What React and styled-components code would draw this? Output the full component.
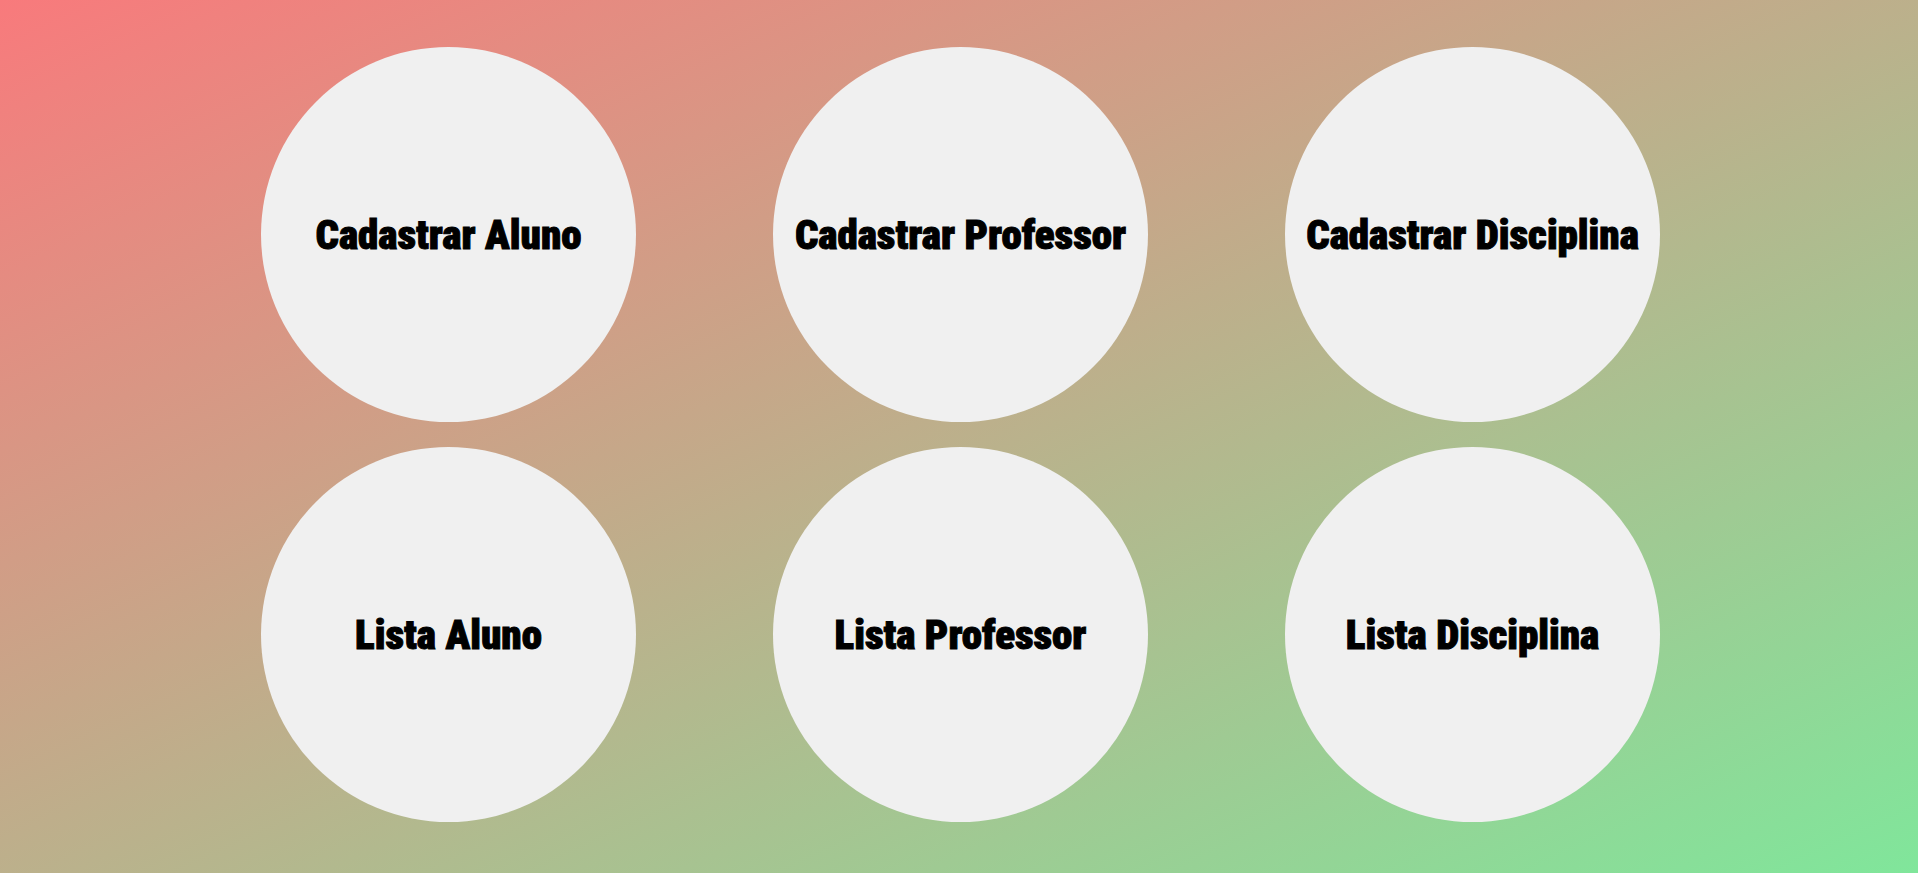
import React from "react";
import styled, { createGlobalStyle } from "styled-components";

const GlobalStyle = createGlobalStyle`
  * {
    box-sizing: border-box;
  }
  body {
    margin: 0;
  }
`;

const Page = styled.main`
  min-height: 100vh;
  padding: 47px 121px 51px 124px;
  background: linear-gradient(to bottom right, #f87a7c, #80e69b);
`;

const Menu = styled.nav`
  display: flex;
  flex-direction: column;
  gap: 25px;
`;

const MenuRow = styled.div`
  display: flex;
  flex-wrap: wrap;
  justify-content: space-evenly;
  row-gap: 25px;
`;

const CircleButton = styled.button`
  width: 375px;
  height: 375px;
  padding: 0;
  border: none;
  border-radius: 50%;
  background: #f0f0f0;
  color: #000;
  font-family: Impact, "Roboto Condensed", "Arial Narrow", sans-serif;
  font-size: 41px;
  font-weight: 900;
  line-height: 48px;
  white-space: nowrap;
  -webkit-text-stroke: 1px #000;
  cursor: pointer;
`;

const rows = [
  ["Cadastrar Aluno", "Cadastrar Professor", "Cadastrar Disciplina"],
  ["Lista Aluno", "Lista Professor", "Lista Disciplina"],
];

export default function App() {
  return (
    <>
      <GlobalStyle />
      <Page>
        <Menu>
          {rows.map((labels) => (
            <MenuRow key={labels[0]}>
              {labels.map((label) => (
                <CircleButton key={label} type="button">
                  {label}
                </CircleButton>
              ))}
            </MenuRow>
          ))}
        </Menu>
      </Page>
    </>
  );
}
